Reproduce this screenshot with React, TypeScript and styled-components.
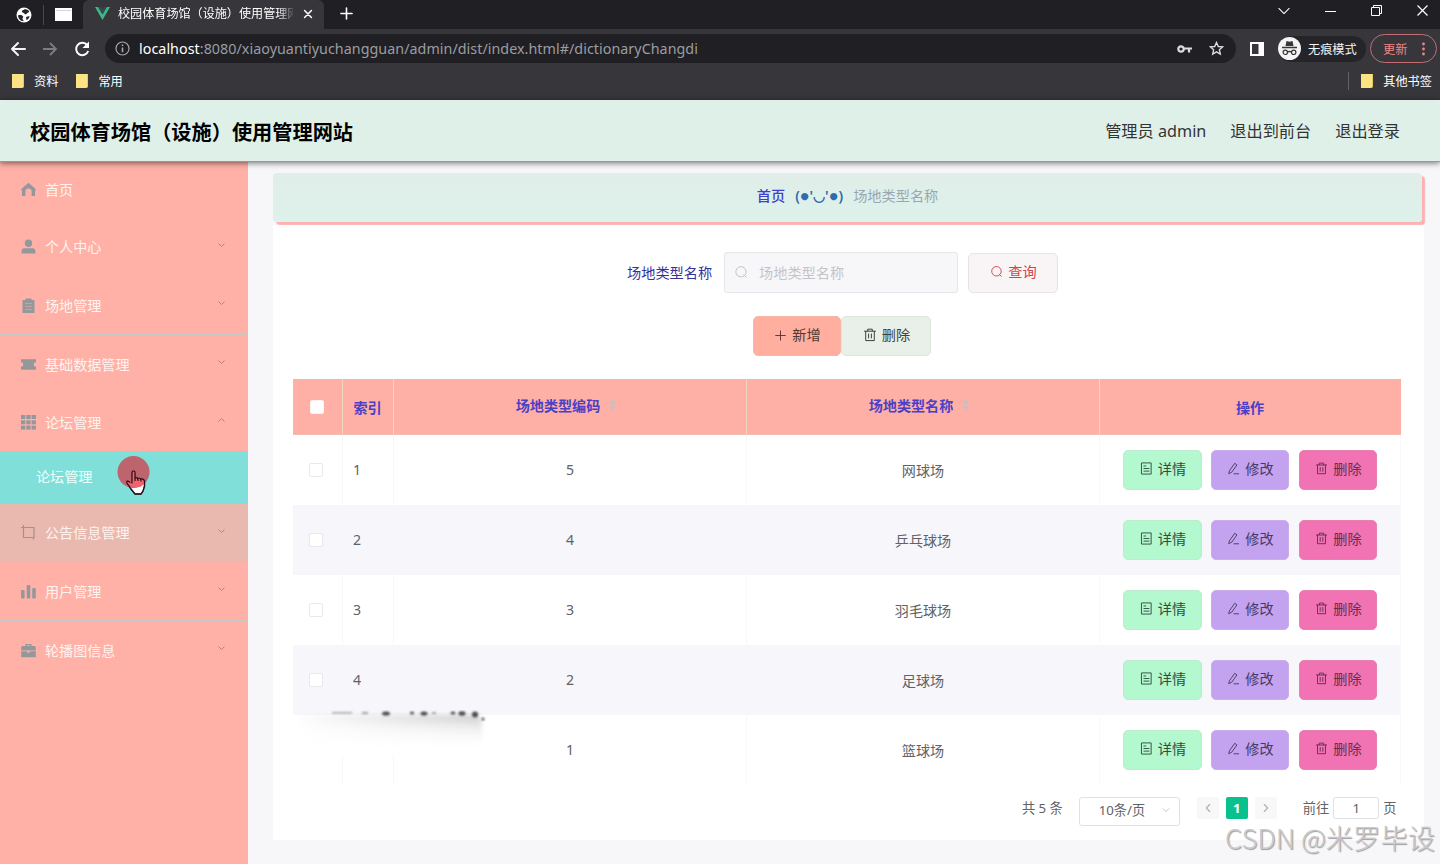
import React from "react";
import styled, { createGlobalStyle, css } from "styled-components";

const Global = createGlobalStyle`
  * { box-sizing: border-box; }
  body { margin: 0; overflow: hidden; }
  body, button, input { font-family: "Noto Sans", "Noto Sans CJK SC", sans-serif; }
  button { cursor: pointer; }
  svg { display: block; flex: none; }
`;

const Page = styled.div`
  position: relative;
  width: 1440px;
  height: 864px;
  overflow: hidden;
  display: flex;
  flex-direction: column;
  background: #f7f7fa;
  color: #606266;
  font-size: 14px;
`;

/* ---------- browser window ---------- */
const TabStrip = styled.div`
  display: flex;
  align-items: center;
  height: 29px;
  flex: none;
  background: #202024;
  color: #fff;
`;
const PinnedTabs = styled.div`
  display: flex;
  align-items: center;
  width: 83px;
  height: 27px;
  padding-left: 16px;
`;
const PinDivider = styled.i`
  width: 1px;
  height: 20px;
  margin: 0 11px 0 11px;
  background: #48484c;
`;
const ActiveTab = styled.div`
  display: flex;
  align-items: center;
  width: 241px;
  height: 29px;
  padding: 0 10px 2px 12px;
  background: #37373b;
  border-radius: 6px 6px 0 0;
`;
const TabTitle = styled.span`
  width: 177px;
  margin: 0 9px 0 8px;
  overflow: hidden;
  white-space: nowrap;
  font-size: 12.1px;
  line-height: 20px;
  mask-image: linear-gradient(90deg, #000 160px, transparent 177px);
`;
const NewTab = styled.div`
  margin: -2px 0 0 16px;
`;
const WindowControls = styled.div`
  display: flex;
  align-items: center;
  gap: 35px;
  margin: -8px 12px 0 auto;
`;
const Toolbar = styled.div`
  display: flex;
  align-items: center;
  flex: none;
  height: 39px;
  padding: 0 3px 0 9px;
  background: #37373b;
  color: #f4f4f4;
`;
const NavIcons = styled.div`
  display: flex;
  gap: 14px;
  width: 96px;
`;
const AddressBar = styled.div`
  display: flex;
  align-items: center;
  gap: 17px;
  width: 1131px;
  height: 29px;
  margin-right: 14px;
  padding: 0 12px 0 10px;
  border-radius: 15px;
  background: #202024;
`;
const Url = styled.span`
  margin-left: -8px;
  flex: 1;
  font-size: 14.3px;
  line-height: 20px;
  letter-spacing: 0.04px;
  white-space: nowrap;
  color: #9b9da1;
  b { font-weight: 400; color: #fff; }
`;
const Incognito = styled.div`
  display: flex;
  align-items: center;
  gap: 7px;
  width: 88px;
  height: 26px;
  margin-left: 14px;
  border-radius: 13px;
  background: #252529;
  font-size: 12.2px;
  white-space: nowrap;
`;
const UpdateButton = styled.div`
  display: flex;
  align-items: center;
  justify-content: space-between;
  width: 67px;
  height: 29px;
  margin-left: auto;
  padding: 0 11px 0 12px;
  border: 1px solid #c46c72;
  border-radius: 15px;
  color: #ef8585;
  font-size: 12.2px;
`;
const Bookmarks = styled.div`
  display: flex;
  align-items: center;
  flex: none;
  height: 32px;
  padding: 0 8px 6px 12px;
  background: #37373b;
  color: #fff;
  font-size: 12.2px;
`;
const Bookmark = styled.span<{ $end?: boolean }>`
  display: flex;
  align-items: center;
  gap: 10px;
  margin-right: ${(p) => (p.$end ? 0 : "18px")};
  ${(p) => p.$end && css`margin-left: auto; padding-left: 12px; border-left: 1px solid #626266;`}
`;
const FolderIcon = styled.i`
  width: 12px;
  height: 14px;
  background: #fbe283;
  border-bottom-right-radius: 2px;
  border-right: 1px solid #e8c95b;
`;

/* ---------- application ---------- */
const Header = styled.header`
  position: relative;
  z-index: 2;
  display: flex;
  align-items: center;
  flex: none;
  height: 62px;
  padding: 2px 40px 0 30px;
  background: #dff0e9;
  border-bottom: 1px solid #929b98;
  box-shadow: 0 1px 6px rgba(0, 0, 0, 0.55);
`;
const SiteTitle = styled.h1`
  margin: 0 auto 0 0;
  font-size: 20.2px;
  line-height: 30px;
  font-weight: 700;
  color: #000;
`;
const HeaderLink = styled.span`
  margin-left: 24px;
  font-size: 16.2px;
  color: #333;
  margin-top: -3px;
`;
const Body = styled.div`
  display: flex;
  flex: 1;
  min-height: 0;
`;
const Sidebar = styled.aside`
  width: 248px;
  flex: none;
  background: #ffb1a7;
`;
const MenuItem = styled.div<{ $height: number; $hover?: boolean; $open?: boolean }>`
  display: flex;
  align-items: center;
  height: ${(p) => p.$height}px;
  padding: 0 22px 0 21px;
  border-bottom: 1px solid ${(p) => (p.$open ? "transparent" : "#c4c7c4")};
  background: ${(p) => (p.$hover ? "#e9b8ae" : "transparent")};
  color: #fff3ef;
  span { flex: 1; margin: 1px 0 0 9px; font-size: 14.1px; line-height: 20px; }
  > svg:last-child { margin-top: -4px; }
`;
const SubItem = styled.div`
  display: flex;
  align-items: center;
  height: 53px;
  padding: 0 0 3px 36px;
  background: #80e0d9;
  color: #f0fffd;
  font-size: 14.1px;
`;
const Main = styled.main`
  flex: 1;
  padding: 11px 16px 0 25px;
`;
const Breadcrumb = styled.nav`
  display: flex;
  align-items: center;
  justify-content: center;
  width: 1149px;
  height: 49px;
  padding-bottom: 3px;
  border-radius: 4px;
  background: linear-gradient(#e1ede8, #dcf2ea);
  box-shadow: 3px 3px 1px #ffb0b2;
  font-size: 14.2px;
  line-height: 20px;
  color: #97a8b3;
  b { color: #3c40cc; font-weight: 500; }
`;
const Face = styled.i`
  display: flex;
  align-items: center;
  justify-content: space-between;
  width: 48px;
  margin: 0 10px 0 10px;
  font-style: normal;
  font-weight: 600;
  color: #316bad;
  small { font-family: "DejaVu Sans", sans-serif; font-size: 9.5px; }
`;
const Card = styled.section`
  width: 1151px;
  height: 615px;
  margin-top: 3px;
  padding: 27px 22px 0 20px;
  background: #fff;
`;
const SearchRow = styled.div`
  display: flex;
  align-items: center;
  height: 41px;
  padding-left: 334px;
`;
const SearchLabel = styled.label`
  width: 97px;
  padding-bottom: 2px;
  font-size: 14.2px;
  color: #38309a;
`;
const SearchBox = styled.div`
  display: flex;
  align-items: center;
  width: 234px;
  height: 41px;
  padding: 0 0 2px 9px;
  gap: 11px;
  border: 1px solid #e5e5ea;
  border-radius: 3px;
  background: #f7f7f9;
  color: #c4c4c8;
  font-size: 14.2px;
`;
const ActionRow = styled.div`
  display: flex;
  height: 40px;
  margin: 23px 0 23px;
  padding-left: 460px;
`;
type Tone = "query" | "add" | "remove" | "detail" | "edit" | "drop";
const tones: Record<Tone, { bg: string; line: string; ink: string }> = {
  query: { bg: "#f9f5f6", line: "#eae3e5", ink: "#cf4350" },
  add: { bg: "#ffaea0", line: "#f6b7a5", ink: "#51372f" },
  remove: { bg: "#e8f0e9", line: "#dce8d5", ink: "#3b443c" },
  detail: { bg: "#b3f8ce", line: "#bdebcd", ink: "#304e3e" },
  edit: { bg: "#c3a2f0", line: "#caaeea", ink: "#493a61" },
  drop: { bg: "#f173b3", line: "#e681b0", ink: "#65304f" },
};
const Button = styled.button<{ $tone: Tone; $width: number; $left?: number }>`
  display: inline-flex;
  align-items: center;
  justify-content: center;
  gap: 5px;
  width: ${(p) => p.$width}px;
  height: 40px;
  margin: 0 0 0 ${(p) => p.$left ?? 0}px;
  padding: 0 0 2px 1px;
  border: 1px solid ${(p) => tones[p.$tone].line};
  border-radius: 5px;
  background: ${(p) => tones[p.$tone].bg};
  color: ${(p) => tones[p.$tone].ink};
  font-size: 14.2px;
  line-height: 20px;
`;
const columns = "50px 51px 353px 353px 301px";
const TableHead = styled.div`
  display: grid;
  grid-template-columns: ${columns};
  width: 1108px;
  height: 56px;
  background: #ffb0a6;
  border-bottom: 1px solid #f1bdb0;
`;
const HeadCell = styled.div<{ $sortable?: boolean }>`
  display: flex;
  align-items: center;
  justify-content: center;
  gap: 9px;
  padding: ${(p) => (p.$sortable ? "1px 8px 5px 0" : "1px 1px 1px 0")};
  border-right: 1px solid #f4d7b5;
  color: #4b40c5;
  font-size: 14.1px;
  font-weight: 600;
  &:last-child { border-right: 0; }
`;
const Row = styled.div<{ $striped?: boolean }>`
  display: grid;
  grid-template-columns: ${columns};
  width: 1108px;
  height: 70px;
  background: ${(p) => (p.$striped ? "#f7f7fb" : "#fff")};
`;
const Cell = styled.div<{ $start?: boolean }>`
  display: flex;
  align-items: center;
  justify-content: ${(p) => (p.$start ? "flex-start" : "center")};
  padding: 0 0 1px ${(p) => (p.$start ? "10px" : 0)};
  border-right: 1px solid #f8f7fa;
  font-size: 14.1px;
`;
const Checkbox = styled.i<{ $head?: boolean }>`
  width: 14px;
  height: 14px;
  margin-right: ${(p) => (p.$head ? 0 : 4)}px;
  border: 1px solid ${(p) => (p.$head ? "#fff3f0" : "#e9e9ec")};
  border-radius: 2px;
  background: #fff;
`;
const Pagination = styled.div`
  display: flex;
  height: 36px;
  margin-top: 11px;
  padding-left: 729px;
  font-size: 13.2px;
  line-height: 24px;
  white-space: nowrap;
`;
const PageSize = styled.div`
  display: flex;
  align-items: center;
  justify-content: space-between;
  width: 101px;
  height: 29px;
  margin: 1px 17px 0 16px;
  padding: 0 9px 3px 19px;
  border: 1px solid #e0e1e7;
  border-radius: 3px;
  font-size: 13.2px;
`;
const Pager = styled.div<{ $current?: boolean }>`
  display: flex;
  align-items: center;
  justify-content: center;
  width: 22px;
  height: 22px;
  margin: 1px 7px 0 0;
  border-radius: 2px;
  background: ${(p) => (p.$current ? "#08c18d" : "#f8f8f9")};
  color: ${(p) => (p.$current ? "#fff" : "#b0b2b8")};
  font-weight: 700;
`;
const JumpLabel = styled.span`
  margin-left: 19px;
`;
const PageInput = styled.div`
  width: 46px;
  height: 22px;
  margin: 1px 4px 0 4px;
  border: 1px solid #e0e1e7;
  border-radius: 3px;
  line-height: 21px;
  text-align: center;
`;

/* ---------- overlays ---------- */
const Pointer = styled.svg`
  position: absolute;
  z-index: 3;
  left: 116px;
  top: 454px;
`;
const Smudge = styled.svg`
  position: absolute;
  left: 290px;
  top: 706px;
`;
const Watermark = styled.div`
  position: absolute;
  left: 1225px;
  top: 816px;
  font-size: 27.3px;
  line-height: 42px;
  font-family: "Noto Sans CJK SC", sans-serif;
  font-weight: 300;
  white-space: nowrap;
  color: #c9c9cc;
  text-shadow: 1px 1px 1px #98989d;
`;

const Stroke = ({ d, size = 14, width = 1, box = 14 }: { d: string; size?: number; width?: number; box?: number }) => (
  <svg width={size} height={size} viewBox={`0 0 ${box} ${box}`} fill="none" stroke="currentColor" strokeWidth={width} strokeLinecap="round" strokeLinejoin="round">
    <path d={d} />
  </svg>
);

const glyphs = {
  trash: "M1.5 3.2h11M4.7 3V1.2h4.6V3M2.7 3.4v9.2h8.6V3.4M5.6 6v4M8.4 6v4",
  doc: "M2 1h10v12H2zM4.2 4.3h2M4.2 7h5.5M4.2 9.8h5.5",
  pen: "M2.8 9.2 8.3 1.4l2.4 1.7-5.5 7.8-3 1.5zM7.5 12.7h5",
  plus: "M7 2v10M1.8 7h10.4",
  search: "M9.8 11.2A5.2 5.2 0 1 1 11.4 9.6M9.8 9.8l2.4 2.4",
};

const MenuGlyph = ({ name }: { name: string }) => (
  <svg width="15" height="15" viewBox="0 0 15 15" fill="#95989a">
    {name === "home" && <path d="M7.5.8 14.6 7v1.5H14V14h-3.400V9.500a3 3 0 0 0-6.200 0V14H1V8.500H.4V7z" />}
    {name === "user" && <><circle cx="7.5" cy="4.2" r="3.7" /><path d="M.6 14.5v-2.700c0-1.600 1-2.500 2.600-2.500h8.600c1.600 0 2.600.9 2.600 2.500v2.700z" /></>}
    {name === "list" && <><path d="M1.5 2h3V.5h6V2h3v13h-12z" /><path d="M4 5.5h7M4 8.5h7M4 11.5h7" stroke="#c7a39e" /></>}
    {name === "ticket" && <path d="M0 2.2h15v3a2.300 2.300 0 0 0 0 4.600v3H0v-3a2.300 2.300 0 0 0 0-4.600z" />}
    {name === "grid" && [0, 5.3, 10.6].map((y) => [0, 5.3, 10.6].map((x) => <rect key={`${x}-${y}`} x={x} y={y} width="4.3" height="4" />))}
    {name === "crop" && <path d="M2.5 0v12.500H13V2.500H0M12.500 12v2.500" fill="none" stroke="#a48f92" strokeWidth="1.2" />}
    {name === "bars" && <><rect x="0" y="6" width="3.6" height="8.5" rx="1" /><rect x="5.7" y="1" width="3.6" height="13.5" rx="1" /><rect x="11.2" y="4" width="3.6" height="10.5" rx="1" /></>}
    {name === "case" && <><path d="M4.500 3V1h6v2h2.800q1.500 0 1.500 1.500v3H.2v-3Q.2 3 1.700 3zM6 3h3v-.8H6z" fillRule="evenodd" /><path d="M.2 8.300H6v1.200h3V8.300h5.800v6H.2z" /></>}
  </svg>
);

const Caret = ({ up }: { up?: boolean }) => (
  <svg width="9" height="6" viewBox="0 0 9 6" fill="none" stroke="#cf7773">
    <path d={up ? "M1.5 4.5l3-3 3 3" : "M1.5 1.5l3 3 3-3"} />
  </svg>
);

const menu = [
  { icon: "home", label: "首页", height: 56 },
  { icon: "user", label: "个人中心", height: 58 },
  { icon: "list", label: "场地管理", height: 59 },
  { icon: "ticket", label: "基础数据管理", height: 59 },
  { icon: "grid", label: "论坛管理", height: 57, open: true },
  { icon: "crop", label: "公告信息管理", height: 58, hover: true },
  { icon: "bars", label: "用户管理", height: 59 },
  { icon: "case", label: "轮播图信息", height: 59 },
];

const venues = [
  { code: 5, name: "网球场" },
  { code: 4, name: "乒乓球场" },
  { code: 3, name: "羽毛球场" },
  { code: 2, name: "足球场" },
  { code: 1, name: "篮球场" },
];

const SortArrows = () => (
  <svg width="7" height="12" viewBox="0 0 7 12" fill="#c5bfc6">
    <path d="M3.5 0 7 4.8H0zM3.5 12 0 7.2h7z" />
  </svg>
);

const BrowserChrome = () => (
  <>
    <TabStrip>
      <PinnedTabs>
        <svg width="16" height="16" viewBox="0 0 16 16">
          <circle cx="8" cy="8" r="7.5" fill="#fff" />
          <path d="M2 8.500c2-.8 4-.5 5 .8 1 1-.8 1.200-.5 2.500.2 1 1.200 1.300 1 2.500C4.500 14 2.200 11.600 2 8.500zM8 2.500c1.500-.8 4-.3 5.300 2-.5 1.500-2 .8-2.500 2-.5 1.300-2 1-2.500 0S5.500 5.500 6 4s1.500-.3 2-1.500zM10 10l3.500-1c0 2-1.500 3.500-3 4.200z" fill="#26262a" />
        </svg>
        <PinDivider />
        <svg width="17" height="13" viewBox="0 0 17 13"><path d="M0 0h17v13H0z" fill="#fff" /><path d="M1 2.500h15" stroke="#d5d5d5" /></svg>
      </PinnedTabs>
      <ActiveTab>
        <svg width="15" height="13" viewBox="0 0 15 13"><path d="M0 0h3.200l4.300 7.500L11.800 0H15L7.500 13z" fill="#41b883" /><path d="M3.200 0H6l1.500 2.600L9 0h2.800L7.500 7.500z" fill="#35495e" /></svg>
        <TabTitle>校园体育场馆（设施）使用管理网</TabTitle>
        <Stroke d="M3 3l8 8M11 3l-8 8" size={12} width={1.8} />
      </ActiveTab>
      <NewTab><Stroke d="M7 1v12M1 7h12" width={1.7} size={13} /></NewTab>
      <WindowControls>
        <Stroke d="M1 4l6 6 6-6" size={12} width={1.2} />
        <svg width="11" height="10" viewBox="0 0 11 10"><path d="M0 5.500h11" stroke="#fff" /></svg>
        <svg width="11" height="11" viewBox="0 0 11 11" fill="none" stroke="#fff"><path d="M.5 2.500h8v8h-8zM2.500 2.500v-2h8v8h-2" /></svg>
        <svg width="11" height="11" viewBox="0 0 11 11" fill="none" stroke="#fff" strokeWidth="1.200"><path d="M.5.5l10 10M10.500.5l-10 10" /></svg>
      </WindowControls>
    </TabStrip>
    <Toolbar>
      <NavIcons>
        <Stroke d="M16 9H3M9 3L3 9l6 6" box={18} size={18} width={2} />
        <svg width="18" height="18" viewBox="0 0 18 18" fill="none" stroke="#7d7d81" strokeWidth="1.800"><path d="M2 9h13M9 3l6 6-6 6" /></svg>
        <svg width="18" height="18" viewBox="0 0 18 18" fill="none" stroke="#fff" strokeWidth="2"><path d="M14.300 5.200A6.200 6.200 0 1 0 15.200 11" /><path d="M16 1.500V8H9.500z" fill="#fff" stroke="none" /></svg>
      </NavIcons>
      <AddressBar>
        <svg width="15" height="15" viewBox="0 0 15 15" fill="none" stroke="#a7a8ab" strokeWidth="1.200"><circle cx="7.500" cy="7.500" r="6.500" /><path d="M7.500 6.500v4.700M7.500 3.600V5" strokeWidth="1.600" /></svg>
        <Url><b>localhost</b>:8080/xiaoyuantiyuchangguan/admin/dist/index.html#/dictionaryChangdi</Url>
        <svg width="15" height="10" viewBox="0 0 15 10" fill="none" stroke="#dcdcde" strokeWidth="2.200"><circle cx="4" cy="5" r="2.700" /><path d="M7 4.500h8M12 5v3.500" /></svg>
        <svg width="15" height="15" viewBox="0 0 15 15" fill="none" stroke="#dcdcde" strokeWidth="1.400"><path d="M7.500 1.500l1.800 4 4.300.4-3.200 2.900.9 4.200-3.800-2.200L3.700 13l.9-4.200L1.400 5.900l4.300-.4z" /></svg>
      </AddressBar>
      <svg width="14" height="14" viewBox="0 0 14 14"><path d="M0 0h14v14H0z" fill="#fff" /><path d="M2 2h6.500v10H2z" fill="#37373b" /></svg>
      <Incognito>
        <svg width="23" height="23" viewBox="0 0 23 23"><circle cx="11.500" cy="11.500" r="11.500" fill="#f4f4f4" /><path d="M7.500 9l1-5 3 .7 3-.7 1 5z" fill="#37373b" /><path d="M4 10.500h15M9 15q2.500-1 5 0" stroke="#37373b" strokeWidth="1.300" fill="none" /><circle cx="7.300" cy="15.300" r="2.200" fill="none" stroke="#37373b" strokeWidth="1.200" /><circle cx="15.700" cy="15.300" r="2.200" fill="none" stroke="#37373b" strokeWidth="1.200" /></svg>
        无痕模式
      </Incognito>
      <UpdateButton>更新
        <svg width="3" height="14" viewBox="0 0 3 14" fill="#ef8585"><circle cx="1.500" cy="2" r="1.400" /><circle cx="1.500" cy="7" r="1.400" /><circle cx="1.500" cy="12" r="1.400" /></svg>
      </UpdateButton>
    </Toolbar>
    <Bookmarks>
      <Bookmark><FolderIcon />资料</Bookmark>
      <Bookmark><FolderIcon />常用</Bookmark>
      <Bookmark $end><FolderIcon />其他书签</Bookmark>
    </Bookmarks>
  </>
);

export default function App() {
  return (
    <Page>
      <Global />
      <BrowserChrome />
      <Header>
        <SiteTitle>校园体育场馆（设施）使用管理网站</SiteTitle>
        <HeaderLink>管理员 admin</HeaderLink>
        <HeaderLink>退出到前台</HeaderLink>
        <HeaderLink>退出登录</HeaderLink>
      </Header>
      <Body>
        <Sidebar>
          {menu.map((m, i) => (
            <React.Fragment key={m.label}>
              <MenuItem $height={m.height} $hover={m.hover} $open={m.open}>
                <MenuGlyph name={m.icon} />
                <span>{m.label}</span>
                {i > 0 && <Caret up={m.open} />}
              </MenuItem>
              {m.open && <SubItem>论坛管理</SubItem>}
            </React.Fragment>
          ))}
        </Sidebar>
        <Main>
          <Breadcrumb><b>首页</b><Face>(<small>●</small>'◡'<small>●</small>)</Face><span>场地类型名称</span></Breadcrumb>
          <Card>
            <SearchRow>
              <SearchLabel>场地类型名称</SearchLabel>
              <SearchBox><Stroke d={glyphs.search} />场地类型名称</SearchBox>
              <Button $tone="query" $width={90} $left={10}><Stroke d={glyphs.search} size={13} />查询</Button>
            </SearchRow>
            <ActionRow>
              <Button $tone="add" $width={88}><Stroke d={glyphs.plus} size={13} />新增</Button>
              <Button $tone="remove" $width={90}><Stroke d={glyphs.trash} />删除</Button>
            </ActionRow>
            <TableHead>
              <HeadCell><Checkbox $head /></HeadCell>
              <HeadCell>索引</HeadCell>
              <HeadCell $sortable>场地类型编码<SortArrows /></HeadCell>
              <HeadCell $sortable>场地类型名称<SortArrows /></HeadCell>
              <HeadCell>操作</HeadCell>
            </TableHead>
            {venues.map((v, i) => (
              <Row key={v.code} $striped={i % 2 === 1}>
                <Cell>{i < 4 && <Checkbox />}</Cell>
                <Cell $start>{i < 4 && i + 1}</Cell>
                <Cell>{v.code}</Cell>
                <Cell>{v.name}</Cell>
                <Cell>
                  <Button $tone="detail" $width={79}><Stroke d={glyphs.doc} size={13} />详情</Button>
                  <Button $tone="edit" $width={78} $left={9}><Stroke d={glyphs.pen} size={13} />修改</Button>
                  <Button $tone="drop" $width={78} $left={10}><Stroke d={glyphs.trash} size={13} />删除</Button>
                </Cell>
              </Row>
            ))}
            <Pagination>
              <span>共 5 条</span>
              <PageSize>10条/页<svg width="8" height="6" viewBox="0 0 8 6" fill="none" stroke="#c3c5cb"><path d="M1 1.500l3 3 3-3" /></svg></PageSize>
              <Pager><Stroke d="M9 3L5 7l4 4" width={1.5} size={12} /></Pager>
              <Pager $current>1</Pager>
              <Pager><Stroke d="M5 3l4 4-4 4" width={1.5} size={12} /></Pager>
              <JumpLabel>前往</JumpLabel>
              <PageInput>1</PageInput>
              <span>页</span>
            </Pagination>
          </Card>
        </Main>
      </Body>
      <Smudge width="210" height="60" viewBox="0 0 210 60">
        <defs>
          <linearGradient id="fade" x1="0" y1="0" x2="0" y2="1"><stop offset="0" stopColor="#777" stopOpacity=".4" /><stop offset=".4" stopColor="#aaa" stopOpacity=".16" /><stop offset="1" stopColor="#fff" stopOpacity="0" /></linearGradient>
          <linearGradient id="reveal"><stop offset="0" stopColor="#000" /><stop offset=".9" stopColor="#fff" /></linearGradient>
          <mask id="side"><rect width="210" height="60" fill="url(#reveal)" /></mask>
          <filter id="soft"><feGaussianBlur stdDeviation="0.9" /></filter>
          <filter id="haze"><feGaussianBlur stdDeviation="2" /></filter>
        </defs>
        <path d="M6 9h186v40H6z" fill="#fff" />
        <g mask="url(#side)"><path d="M10 9h178l4 7v30H10z" fill="url(#fade)" filter="url(#haze)" /></g>
        <path d="M10 2h182v4H10z" fill="#f7f7fb" />
        <g fill="#4c4c50" filter="url(#soft)">
          <path d="M42 6h20v1.500H42zM72 6h6v2h-6zM142 6h4v2h-4z" opacity=".5" />
          <ellipse cx="96" cy="7.500" rx="4" ry="2" /><ellipse cx="122" cy="7" rx="2" ry="1.500" /><ellipse cx="134" cy="7.500" rx="3.500" ry="2" />
          <ellipse cx="163" cy="7" rx="2.500" ry="1.500" /><ellipse cx="172" cy="7.500" rx="3.500" ry="2.200" /><ellipse cx="185" cy="8.500" rx="3" ry="3" /><circle cx="193" cy="13" r="1.500" />
        </g>
      </Smudge>
      <Pointer width="36" height="46" viewBox="0 0 36 46">
        <path d="M16 18.500c0-2 3-2 3 0V24l2-.8 2 1.300 2-.3 1.300 1.500 2.200.5v6.300L27 37l-2 3h-6l-4-5-4-6c-.8-2 1-2.800 3-.5l2 1z" fill="#fff" stroke="#1c1420" strokeWidth="1.300" />
        <circle cx="17.500" cy="18" r="16" fill="#c4565f" fillOpacity=".9" />
        <path d="M16 18.500c0-2 3-2 3 0V24l2-.8 2 1.300 2-.3 1.300 1.500 2.200.5v3L24 33h-5l-6-2-2-2c-.8-2 1-2.800 3-.5l2 1z" fill="#f2626c" />
        <path d="M16 29.500v-11c0-2 3-2 3 0V27M19 24c2-1 3 0 3 3M22 24.500c2-.8 3 .3 3 3M25 25c2-.3 3 .5 3.500 2v5L27 37l-2 3h-6l-4-5-4-6c-.8-2 1-2.800 3-.5" fill="none" stroke="#241020" strokeWidth="1.200" />
      </Pointer>
      <Watermark>CSDN @米罗毕设</Watermark>
    </Page>
  );
}
